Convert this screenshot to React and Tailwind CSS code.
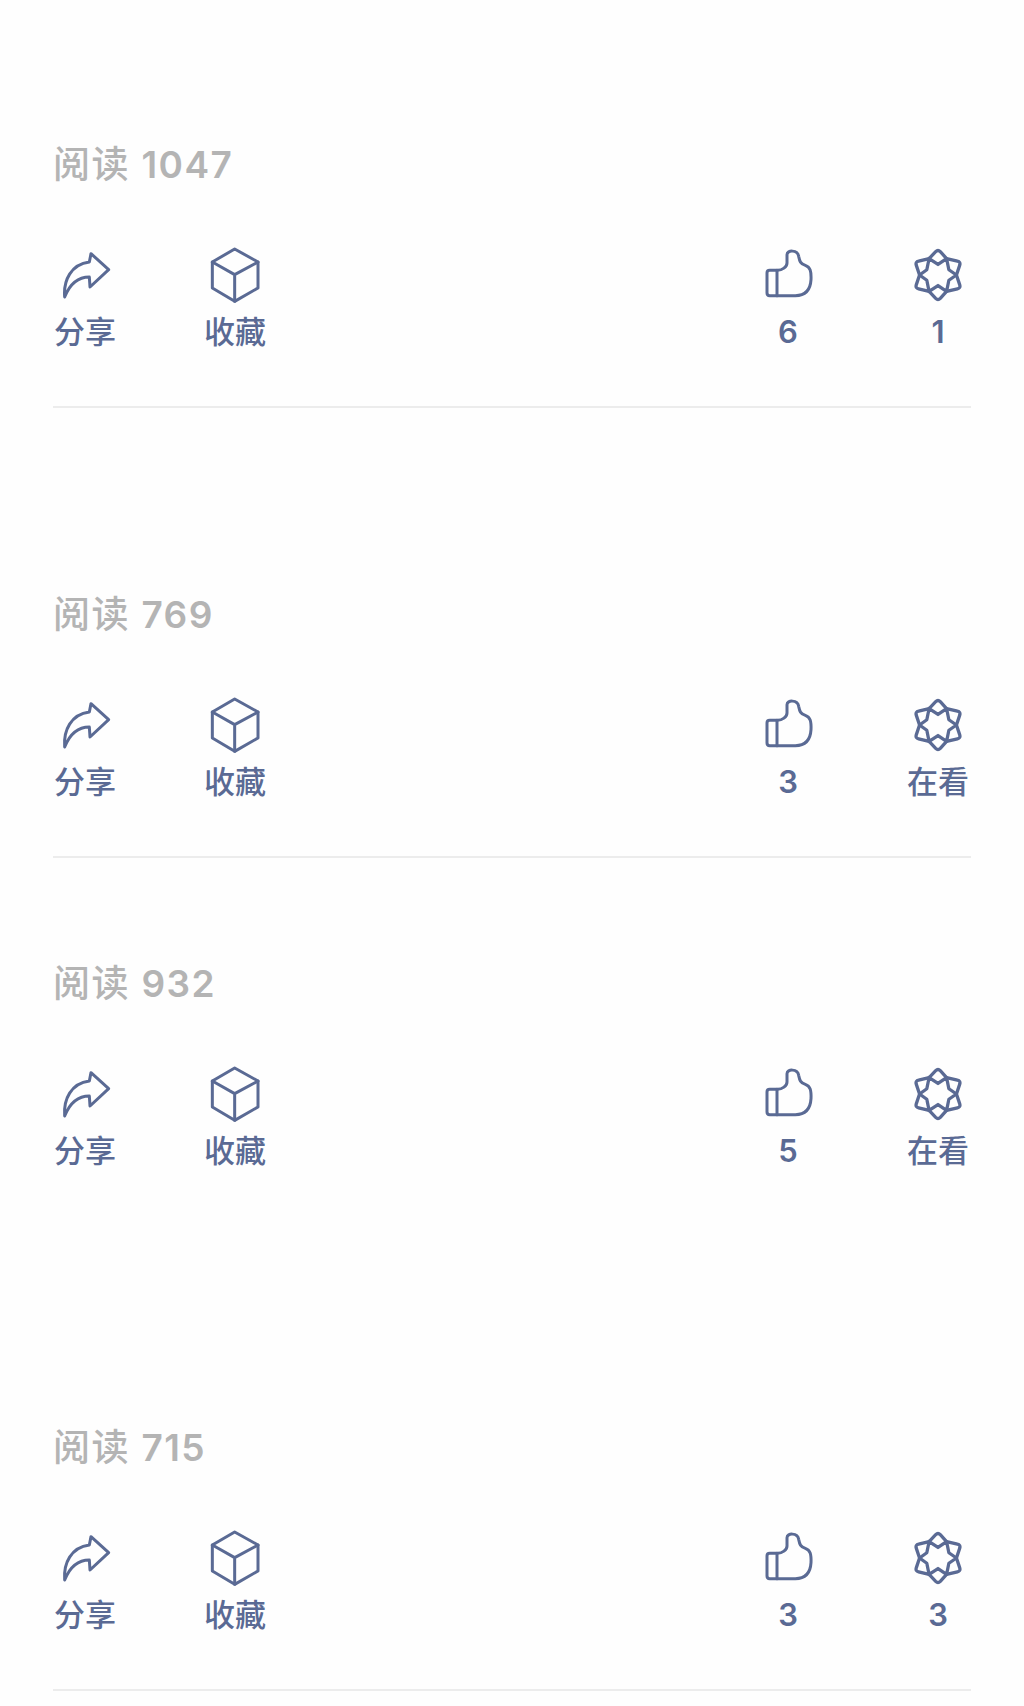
const blue = '#5a6a94';

function ShareIcon() {
  return (
    <svg width="56" height="56" viewBox="53 350 168 168" fill="none" stroke={blue} strokeWidth="9" strokeLinejoin="round" strokeLinecap="round">
      <path d="M76 500C72 450 95 402 150 395L155 370L208 418L152 470L150 440C115 440 90 465 76 500Z" />
    </svg>
  );
}

function BoxIcon() {
  return (
    <svg width="56" height="56" viewBox="502 352 168 168" fill="none" stroke={blue} strokeWidth="9" strokeLinejoin="round" strokeLinecap="round">
      <path d="M585 358L655 397V475L585 515L518 475V397Z" />
      <path d="M518 397L585 435L655 397M585 435V515" />
    </svg>
  );
}

function ThumbIcon() {
  return (
    <svg width="56" height="56" viewBox="59 52 168 168" fill="none" stroke={blue} strokeWidth="9" strokeLinejoin="round" strokeLinecap="round">
      <path d="M112 122H88C83 122 80 125 80 130V190C80 195 83 198 88 198H165C190 198 210 185 212 150C213 125 210 112 195 107C180 102 178 95 175 80C172 60 140 60 140 75V100C140 112 125 122 112 122Z" />
      <path d="M110 122V198" />
    </svg>
  );
}

function StarIcon() {
  return (
    <svg width="56" height="56" viewBox="14 15 170 170" fill="none" stroke={blue} strokeWidth="10" strokeLinejoin="round" strokeLinecap="round">
      <path d="M92 29Q99 22 106 29L125 50L158 58Q168 60 165 70L155 100L165 130Q168 140 158 142L125 150L106 171Q99 178 92 171L72 150L40 142Q30 140 33 130L43 100L33 70Q30 60 40 58L72 50Z" />
      <path d="M72 50L99 68L125 50L132 84L155 100L132 116L125 150L99 132L72 150L65 116L43 100L65 84Z" />
    </svg>
  );
}

function Action({ icon, label, className }) {
  return (
    <div className={`flex w-[72px] flex-col items-center ${className}`}>
      {icon}
      <span className="mt-[11px] whitespace-nowrap text-[31px] leading-[36px] font-medium text-[#5a6a94]">{label}</span>
    </div>
  );
}

function Post({ reads, likes, wow, divider = true, className = '' }) {
  return (
    <section className={`mx-[53px] ${className}`}>
      <p className="text-[37px] leading-[40px] font-medium tracking-[1.5px] text-[#b4b4b4]">
        阅读 <span className="font-semibold">{reads}</span>
      </p>
      <div className="mt-[62px] flex items-start justify-between pb-[56px]">
        <div className="flex">
          <Action icon={<ShareIcon />} label="分享" className="-ml-[4px]" />
          <Action icon={<BoxIcon />} label="收藏" className="ml-[78px]" />
        </div>
        <div className="flex">
          <Action icon={<ThumbIcon />} label={<span className="font-semibold">{likes}</span>} />
          <Action icon={<StarIcon />} label={/\d/.test(wow) ? <span className="font-semibold">{wow}</span> : wow} className="ml-[78px] -mr-[3px]" />
        </div>
      </div>
      <div className={`h-[2px] ${divider ? 'bg-[#ececec]' : ''}`} />
    </section>
  );
}

export default function App() {
  return (
    <div className="h-[1706px] overflow-hidden bg-[#fefefe] pt-[145px] font-['Inter','Noto_Sans_CJK_SC',sans-serif]">
      <Post reads="1047" likes="6" wow="1" />
      <Post reads="769" likes="3" wow="在看" className="mt-[187px]" />
      <Post reads="932" likes="5" wow="在看" divider={false} className="mt-[106px]" />
      <Post reads="715" likes="3" wow="3" className="mt-[201px]" />
    </div>
  );
}
